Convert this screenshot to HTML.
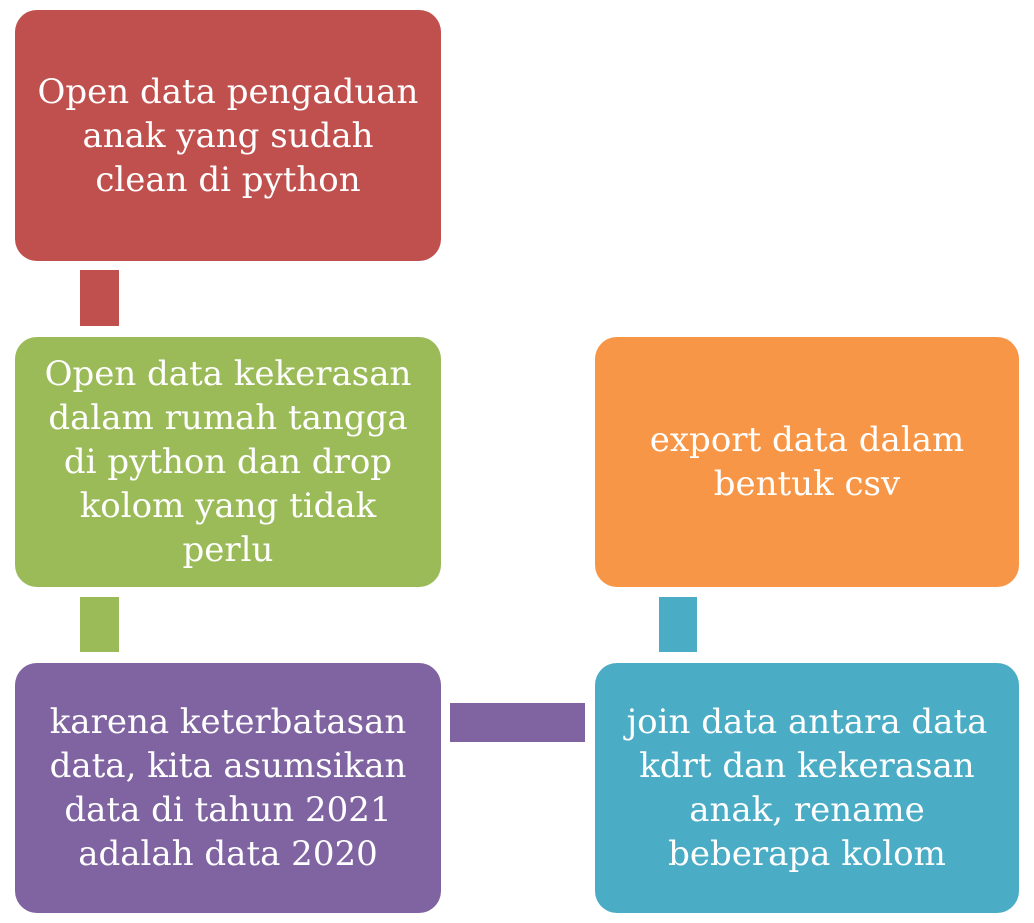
<!DOCTYPE html>
<html><head><meta charset="utf-8"><style>
html,body{margin:0;padding:0;background:#fff;width:1034px;height:923px;overflow:hidden}
.b{position:absolute;border-radius:22px;color:#fff;display:flex;align-items:center;justify-content:center;text-align:center;font-family:"DejaVu Serif","Liberation Serif",serif;font-size:34px;line-height:44px}
.c{position:absolute}
</style></head><body>
<div class="b" style="left:15px;top:10px;width:426px;height:251px;background:#c0504d"><div>Open data pengaduan<br>anak yang sudah<br>clean di python</div></div>
<div class="c" style="left:80px;top:270px;width:39px;height:56px;background:#c0504d"></div>
<div class="b" style="left:15px;top:337px;width:426px;height:250px;background:#9bbb59"><div>Open data kekerasan<br>dalam rumah tangga<br>di python dan drop<br>kolom yang tidak<br>perlu</div></div>
<div class="c" style="left:80px;top:597px;width:39px;height:55px;background:#9bbb59"></div>
<div class="b" style="left:15px;top:663px;width:426px;height:250px;background:#8064a2"><div>karena keterbatasan<br>data, kita asumsikan<br>data di tahun 2021<br>adalah data 2020</div></div>
<div class="c" style="left:450px;top:703px;width:135px;height:39px;background:#8064a2"></div>
<div class="b" style="left:595px;top:663px;width:424px;height:250px;background:#4bacc6"><div>join data antara data<br>kdrt dan kekerasan<br>anak, rename<br>beberapa kolom</div></div>
<div class="c" style="left:659px;top:597px;width:38px;height:55px;background:#4bacc6"></div>
<div class="b" style="left:595px;top:337px;width:424px;height:250px;background:#f79646"><div>export data dalam<br>bentuk csv</div></div>
</body></html>
